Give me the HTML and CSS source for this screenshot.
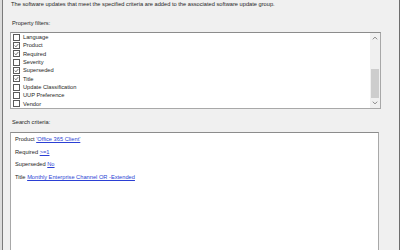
FILE: index.html
```html
<!DOCTYPE html>
<html lang="en">
<head>
<meta charset="utf-8">
<title>Search criteria</title>
<link rel="stylesheet" href="styles.css">
</head>
<body>
<div class="outer">
  <div class="frame">
    <p class="intro">The software updates that meet the specified criteria are added to the associated software update group.</p>
    <p class="label label-filters">Property filters:</p>
    <div class="listbox">
      <ul class="items">
        <li class="item"><span class="cb"></span>Language</li>
        <li class="item"><span class="cb"><svg class="tick" viewBox="0 0 7 7"><path d="M1 3.5 L2.7 5.3 L6 1.5" /></svg></span>Product</li>
        <li class="item"><span class="cb"><svg class="tick" viewBox="0 0 7 7"><path d="M1 3.5 L2.7 5.3 L6 1.5" /></svg></span>Required</li>
        <li class="item"><span class="cb"></span>Severity</li>
        <li class="item"><span class="cb"><svg class="tick" viewBox="0 0 7 7"><path d="M1 3.5 L2.7 5.3 L6 1.5" /></svg></span>Superseded</li>
        <li class="item"><span class="cb"><svg class="tick" viewBox="0 0 7 7"><path d="M1 3.5 L2.7 5.3 L6 1.5" /></svg></span>Title</li>
        <li class="item"><span class="cb"></span>Update Classification</li>
        <li class="item"><span class="cb"></span>UUP Preference</li>
        <li class="item"><span class="cb"></span>Vendor</li>
      </ul>
      <div class="scrollbar">
        <span class="arrow">
          <svg width="6" height="4" viewBox="0 0 6 4"><path d="M0.8 3.3 L3 1.1 L5.2 3.3" fill="none" stroke="#7a7a7a" stroke-width="0.9"/></svg>
        </span>
        <span class="track"><span class="thumb"></span></span>
        <span class="arrow">
          <svg width="6" height="4" viewBox="0 0 6 4"><path d="M0.8 0.7 L3 2.9 L5.2 0.7" fill="none" stroke="#7a7a7a" stroke-width="0.9"/></svg>
        </span>
      </div>
    </div>
    <p class="label label-search">Search criteria:</p>
    <div class="searchbox">
      <p class="crit">Product <a class="lnk" href="#">'Office 365 Client'</a></p>
      <p class="crit">Required <a class="lnk" href="#">&gt;=1</a></p>
      <p class="crit">Superseded <a class="lnk" href="#">No</a></p>
      <p class="crit">Title <a class="lnk" href="#">Monthly Enterprise Channel OR -Extended</a></p>
    </div>
  </div>
</div>
</body>
</html>
```
FILE: styles.css
```css
html, body {
  margin: 0;
  padding: 0;
  overflow: hidden;
  height: 250px;
}
body {
  background: #f0f0f0;
  font-family: "Liberation Sans", Arial, sans-serif;
  font-size: 5.7px;
  color: #1e1e1e;
}
.outer {
  height: 250px;
  padding-left: 2px;
  background: linear-gradient(to right, #dcdcdc 0, #dcdcdc 2px, transparent 2px);
}
.frame {
  width: 389px;
  height: 250px;
  overflow: hidden;
  border-left: 1px solid #7a7a7a;
  border-right: 3px double #6e6e6e;
  background: #f0f0f0;
  padding-left: 7px;
  box-sizing: content-box;
}
p { margin: 0; }
.intro {
  line-height: 9px;
  padding-left: 1px;
  white-space: nowrap;
}
.label {
  line-height: 9px;
  padding-left: 2px;
}
.label-filters { margin-top: 10px; }
.label-search { margin-top: 9px; }
.listbox {
  margin-top: 4px;
  width: 371px;
  height: 77px;
  box-sizing: border-box;
  border: 1px solid #a8a8a8;
  border-top-color: #8c8c8c;
  background: #fff;
  display: flex;
}
.items {
  list-style: none;
  margin: 0;
  padding: 0;
  flex: 1;
}
.item {
  height: 8.33px;
  display: flex;
  align-items: center;
  line-height: 8px;
}
.cb {
  width: 7px;
  height: 7px;
  box-sizing: border-box;
  border: 1px solid #5a5a5a;
  background: #fff;
  margin: 0 3px 0 2px;
  display: flex;
}
.tick {
  width: 5px;
  height: 5px;
  fill: none;
  stroke: #333;
  stroke-width: 1;
}
.scrollbar {
  width: 10px;
  background: #f0f0f0;
  display: flex;
  flex-direction: column;
}
.arrow {
  height: 10px;
  display: flex;
  align-items: center;
  justify-content: center;
}
.track {
  flex: 1;
  display: flex;
  flex-direction: column;
  justify-content: flex-end;
  padding: 0 1px;
}
.thumb {
  height: 29px;
  background: #cdcdcd;
}
.searchbox {
  margin-top: 5px;
  width: 369px;
  height: 130px;
  box-sizing: border-box;
  border: 1px solid #a8a8a8;
  border-top-color: #8c8c8c;
  border-bottom: 0;
  background: #fff;
  padding: 0 0 0 4px;
}
.crit {
  line-height: 12.6px;
}
.lnk {
  color: #2b3fd4;
  text-decoration: underline;
}
```
